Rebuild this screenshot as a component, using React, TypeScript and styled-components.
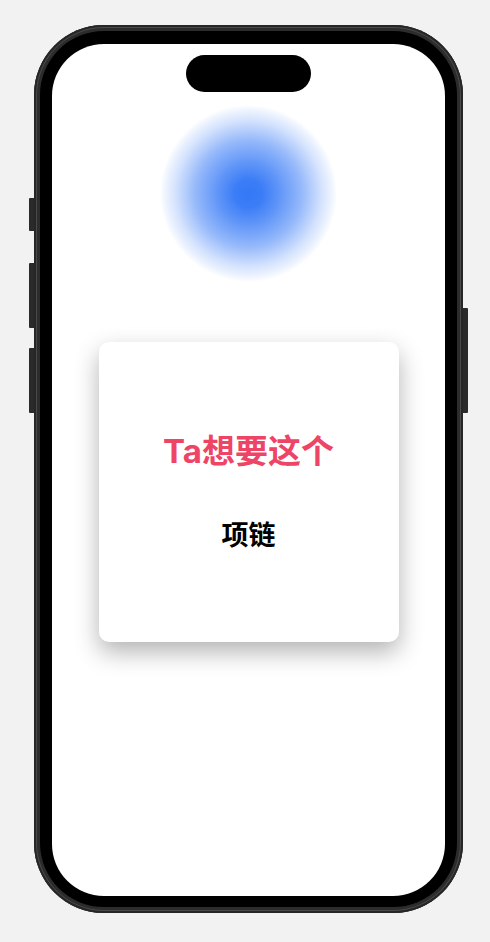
import styled, { createGlobalStyle } from "styled-components"

const GlobalStyle = createGlobalStyle`
    html, body {
        margin: 0;
        padding: 0;
        background: #f2f2f2;
    }
    body {
        font-family: Inter, "Noto Sans CJK SC", sans-serif;
    }
`

const Page = styled.main`
    height: 942px;
    padding-top: 25px;
    padding-left: 34px;
    box-sizing: border-box;
`

const Frame = styled.div`
    position: relative;
    width: 429px;
    height: 888px;
    box-sizing: border-box;
    padding: 6px;
    border-radius: 70px;
    background: #2c2c2c;
    box-shadow: inset 0 0 0 2px #262626, inset 0 0 0 3px #4a4a4a;
`

const Bezel = styled.div`
    height: 100%;
    box-sizing: border-box;
    padding: 13px 12px 11px 12px;
    border-radius: 64px;
    background: #000;
`

const SideButton = styled.span<{ $side: "left" | "right"; $top: number; $h: number }>`
    position: absolute;
    top: ${p => p.$top}px;
    ${p => (p.$side === "left" ? "left: -5px;" : "right: -5px;")}
    width: 5px;
    height: ${p => p.$h}px;
    background: #2a2a2a;
    border-radius: ${p => (p.$side === "left" ? "1px 0 0 1px" : "0 1px 1px 0")};
`

const Screen = styled.div`
    height: 100%;
    border-radius: 52px;
    background: #fff;
    overflow: hidden;
    display: flex;
    flex-direction: column;
    align-items: center;
    padding-top: 11px;
    box-sizing: border-box;
`

const Island = styled.div`
    width: 125px;
    height: 37px;
    border-radius: 19px;
    background: #000;
`

const Glow = styled.div`
    margin-top: 13px;
    width: 177px;
    height: 177px;
    border-radius: 50%;
    background: radial-gradient(
        circle closest-side,
        rgba(52, 120, 246, 1) 0%,
        rgba(52, 120, 246, 0.96) 16%,
        rgba(52, 120, 246, 0.78) 35%,
        rgba(52, 120, 246, 0.52) 60%,
        rgba(52, 120, 246, 0.22) 82%,
        rgba(52, 120, 246, 0.06) 96%,
        rgba(52, 120, 246, 0) 100%
    );
`

const Card = styled.section`
    margin-top: 60px;
    width: 300px;
    height: 300px;
    border-radius: 10px;
    background: #fff;
    box-shadow: 0 10px 24px rgba(0, 0, 0, 0.3);
    display: flex;
    flex-direction: column;
    align-items: center;
    justify-content: center;
    gap: 54px;
    h1 {
        margin: 0;
        font-size: 33px;
        font-weight: 700;
        color: #ee4466;
        line-height: 1;
    }
    p {
        margin: 0;
        font-size: 27px;
        font-weight: 600;
        color: #000;
        line-height: 1;
    }
`

export default function App() {
    return (
        <>
            <GlobalStyle />
            <Page>
                <Frame>
                    <SideButton $side="left" $top={173} $h={33} />
                    <SideButton $side="left" $top={238} $h={65} />
                    <SideButton $side="left" $top={323} $h={65} />
                    <SideButton $side="right" $top={283} $h={105} />
                    <Bezel>
                        <Screen>
                            <Island />
                            <Glow />
                            <Card>
                                <h1>Ta想要这个</h1>
                                <p>项链</p>
                            </Card>
                        </Screen>
                    </Bezel>
                </Frame>
            </Page>
        </>
    )
}
